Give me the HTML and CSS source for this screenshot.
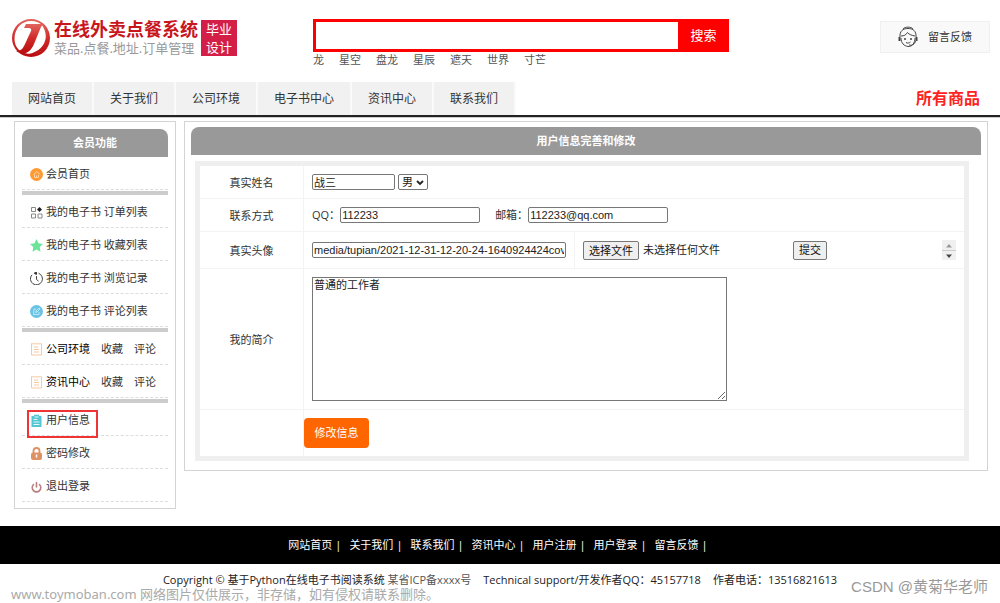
FILE: index.html
```html
<!DOCTYPE html>
<html lang="zh-CN">
<head>
<meta charset="utf-8">
<title>在线外卖点餐系统</title>
<link rel="stylesheet" href="styles.css">
</head>
<body>
<header class="header">
  <a class="logo" href="#">
    <svg class="logo-mark" viewBox="0 0 38 38" aria-hidden="true">
      <defs>
        <linearGradient id="red" x1="0" y1="0" x2="0" y2="1"><stop offset="0" stop-color="#e2655f"/><stop offset=".5" stop-color="#cf2a28"/><stop offset="1" stop-color="#b90d10"/></linearGradient>
      </defs>
      <path fill="url(#red)" fill-rule="evenodd" d="M19 0a19 19 0 1 0 0 38a19 19 0 1 0 0-38zM19 2C29 2 35 9 35 18C35 28 29 35 20 35C9 35 2.500 29 2.500 20C2.500 10 9 2 19 2z"/>
      <path fill="url(#red)" d="M14 5H31L29 8L22 25C18 34 12 37 4 32C10 32 11 29 13 25L19 12C20 9.500 18 9 15 9H12z"/>
      <path fill="url(#red)" d="M29 5C38 12 39 24 31 31C26 35 20 37 13 36C24 34 31 29 33 22C35 16 33 10 29 5z"/>
    </svg>
    <span class="logo-text">
      <strong class="logo-name">在线外卖点餐系统</strong>
      <span class="logo-sub">菜品.点餐.地址.订单管理</span>
    </span>
    <span class="logo-badge">毕业<br>设计</span>
  </a>
  <div class="search">
    <form class="search-form">
      <input class="search-input" type="text" aria-label="搜索">
      <button class="search-button" type="button">搜索</button>
    </form>
    <div class="hot-words">
      <a href="#">龙</a><a href="#">星空</a><a href="#">盘龙</a><a href="#">星辰</a><a href="#">遮天</a><a href="#">世界</a><a href="#">寸芒</a>
    </div>
  </div>
  <a class="feedback" href="#">
    <svg class="feedback-icon" viewBox="0 0 20 22" fill="none" stroke="#444" stroke-width="1" aria-hidden="true">
      <path d="M5 3C7 .5 13 .5 15 3M2 11C1.500 5 5 2.500 10 2.500S18.500 5 18 11M3 12C3 17 6 20 10 20.500S17 17 17 12M3 10C6 10 8 9 9.500 6.500C11 8.500 14 9.500 17 10M8 16.500C9.500 17.500 11.500 17 12.500 16M17.500 15C17 18 14 20 11 19"/>
      <path stroke-width="2" d="M1.500 11v4M18.500 11v4"/>
      <circle cx="7" cy="13" r=".6" fill="#444"/><circle cx="13" cy="13" r=".6" fill="#444"/>
    </svg>
    留言反馈
  </a>
</header>

<nav class="nav">
  <a class="tab" href="#">网站首页</a>
  <a class="tab" href="#">关于我们</a>
  <a class="tab" href="#">公司环境</a>
  <a class="tab" href="#">电子书中心</a>
  <a class="tab" href="#">资讯中心</a>
  <a class="tab" href="#">联系我们</a>
  <a class="all-goods" href="#">所有商品</a>
</nav>

<div class="page">
  <aside class="sidebar">
    <h2 class="panel-title">会员功能</h2>
    <ul class="menu">
      <li class="menu-item"><svg class="icon" viewBox="0 0 13 13"><circle cx="6.500" cy="6.500" r="6.500" fill="#ff9a33"/><path d="M3.500 6.500L7 3.500L9.500 6M4.500 6.500V9.500H8.500V6.500M6.500 9V7.500" fill="none" stroke="#ffd9ad" stroke-width=".9"/></svg><a href="#">会员首页</a></li>
    </ul>
    <ul class="menu">
      <li class="menu-item"><svg class="icon" viewBox="0 0 13 13" fill="none" stroke="#888"><path d="M1.500 1.500h4v4h-4zM1.500 8h4v4h-4zM8 8h4v4H8z"/><path d="M9.500 1L12 3.500L9.500 6L7 3.500z" fill="#222" stroke="none"/></svg><a href="#">我的电子书 订单列表</a></li>
      <li class="menu-item"><svg class="icon" viewBox="0 0 13 13"><path fill="#6be39a" d="M6.500 0L8.500 4.300L13 4.900L9.700 8.100L10.500 12.800L6.500 10.500L2.500 12.800L3.300 8.100L0 4.900L4.500 4.300z"/></svg><a href="#">我的电子书 收藏列表</a></li>
      <li class="menu-item"><svg class="icon" viewBox="0 0 13 13" fill="none" stroke="#444"><path d="M8.500 1.200A6 6 0 1 1 2 2.800M6.500 4v3.500L8.500 9"/><path d="M4 1.300L6.500 0V2.500z" fill="#222"/></svg><a href="#">我的电子书 浏览记录</a></li>
      <li class="menu-item"><svg class="icon" viewBox="0 0 13 13"><circle cx="6.500" cy="6.500" r="6.500" fill="#69c3e4"/><path d="M6 4H4L3.500 9.500H9V7M5.500 7.500L6 6L9 3L10 4L7 7z" fill="none" stroke="#d3effa" stroke-width=".8"/></svg><a href="#">我的电子书 评论列表</a></li>
    </ul>
    <ul class="menu">
      <li class="menu-item"><svg class="icon" viewBox="0 0 13 13" fill="none" stroke="#f8c9a0"><path d="M1.500 1V12H11.500V1M1 .8H12M4 4h4M4 6.500h5M4 9h5"/></svg><a class="strong" href="#">公司环境</a><a href="#">收藏</a><a href="#">评论</a></li>
      <li class="menu-item"><svg class="icon" viewBox="0 0 13 13" fill="none" stroke="#f8c9a0"><path d="M1.500 1V12H11.500V1M1 .8H12M4 4h4M4 6.500h5M4 9h5"/></svg><a class="strong" href="#">资讯中心</a><a href="#">收藏</a><a href="#">评论</a></li>
    </ul>
    <ul class="menu">
      <li class="menu-item current"><svg class="icon" viewBox="0 0 13 13"><path fill="#55c5d3" d="M1.500 2H4V.8H9V2H11.500V13H1.500z"/><path stroke="#e2fafa" d="M4.500 3h4M3.500 5.500h4M3.500 8h6M3.500 10.500h6"/></svg><a href="#">用户信息</a></li>
      <li class="menu-item"><svg class="icon" viewBox="0 0 13 13"><path fill="none" stroke="#dd9164" stroke-width="1.800" d="M3.500 6V4A3 3 0 0 1 9.500 4V6"/><rect x="1" y="5.500" width="11" height="7.500" rx="2" fill="#dd9164"/><path stroke="#fff" stroke-width="1.500" d="M6.500 7.500v3"/></svg><a href="#">密码修改</a></li>
      <li class="menu-item"><svg class="icon" viewBox="0 0 13 13"><path fill="none" stroke="#b97f80" stroke-width="1.600" stroke-linecap="round" d="M3.500 4.500A4.300 4.300 0 1 0 9.500 4.500M6.500 2.500V7"/></svg><a href="#">退出登录</a></li>
    </ul>
  </aside>

  <main class="main">
    <h1 class="panel-title">用户信息完善和修改</h1>
    <table class="form-table">
      <tr class="row">
        <th scope="row"><label for="name">真实姓名</label></th>
        <td colspan="2"><div class="fields">
          <input id="name" class="text name" type="text" value="战三">
          <span class="select-box">
            <select class="gender" aria-label="性别"><option>男</option><option>女</option></select>
            <svg class="chevron" viewBox="0 0 8 6" aria-hidden="true"><path d="M1 1L4 4L7 1" fill="none" stroke="#222" stroke-width="1.800"/></svg>
          </span>
        </div></td>
      </tr>
      <tr class="row">
        <th scope="row">联系方式</th>
        <td colspan="2"><div class="fields">
          <label class="pair">QQ：<input class="text contact" type="text" value="112233"></label>
          <label class="pair email">邮箱：<input class="text contact" type="text" value="112233@qq.com"></label>
        </div></td>
      </tr>
      <tr class="row-avatar">
        <th scope="row"><label for="avatar">真实头像</label></th>
        <td class="path-cell"><input id="avatar" class="text path" type="text" value="media/tupian/2021-12-31-12-20-24-1640924424cover.jpg"></td>
        <td><div class="upload">
          <div class="file">
            <input id="file" class="file-input" type="file">
            <label class="button" for="file">选择文件</label>
            <span>未选择任何文件</span>
          </div>
          <button class="button" type="button">提交</button>
          <div class="scroller">
            <button class="step" type="button" aria-label="向上"><svg viewBox="0 0 14 10"><path fill="#999" d="M4 7.500L7 4L10 7.500z"/></svg></button>
            <button class="step" type="button" aria-label="向下"><svg viewBox="0 0 14 10"><path fill="#444" d="M4 3.500L7 7L10 3.500z"/></svg></button>
          </div>
        </div></td>
      </tr>
      <tr class="row-bio">
        <th scope="row"><label for="bio">我的简介</label></th>
        <td colspan="2"><textarea id="bio" class="bio">普通的工作者</textarea></td>
      </tr>
      <tr class="row-submit">
        <th></th>
        <td class="submit-cell" colspan="2"><button class="submit" type="button">修改信息</button></td>
      </tr>
    </table>
  </main>
</div>

<footer class="footer">
  <nav class="footer-nav">
    <span class="footer-item"><a href="#">网站首页</a>|</span>
    <span class="footer-item"><a href="#">关于我们</a>|</span>
    <span class="footer-item"><a href="#">联系我们</a>|</span>
    <span class="footer-item"><a href="#">资讯中心</a>|</span>
    <span class="footer-item"><a href="#">用户注册</a>|</span>
    <span class="footer-item"><a href="#">用户登录</a>|</span>
    <span class="footer-item"><a href="#">留言反馈</a>|</span>
  </nav>
  <p class="copyright">
    <span>Copyright © 基于Python在线电子书阅读系统 <span class="muted">某省ICP备xxxx号</span></span>
    <span>Technical support/开发作者QQ：45157718</span>
    <span>作者电话：13516821613</span>
  </p>
  <p class="source-note"><span class="site">www.toymoban.com</span> 网络图片仅供展示，非存储，如有侵权请联系删除。</p>
  <p class="author-mark">CSDN @黄菊华老师</p>
</footer>
</body>
</html>
```

FILE: styles.css
```css
*,
*::after {
  box-sizing: border-box;
}

body {
  margin: 0;
  min-height: 100vh;
  background: #fff;
  color: #333;
  font: 11px/16px "Open Sans", "Noto Sans CJK SC", sans-serif;
}

a {
  color: inherit;
  text-decoration: none;
}

input,
select,
textarea,
button {
  margin: 0;
  font: 11px/14px "Liberation Sans", "Noto Sans CJK SC", sans-serif;
  color: #222;
}

.header {
  display: grid;
  grid-template-columns: 301px 416px 1fr;
  align-items: start;
  padding: 19px 10px 0 12px;
  height: 82px;
}

.logo {
  display: flex;
  align-items: flex-start;
}

.logo-mark {
  width: 38px;
  height: 38px;
}

.logo-text {
  display: flex;
  flex-direction: column;
  width: 147px;
  padding-left: 4px;
  white-space: nowrap;
}

.logo-name {
  color: #c8161d;
  font-size: 18px;
  line-height: 20px;
}

.logo-sub {
  color: #999;
  font-size: 13px;
  line-height: 18px;
}

.logo-badge {
  width: 36px;
  margin: 1px 0 0 4px;
  background: #d31f48;
  color: #fff;
  font-size: 13px;
  line-height: 18px;
  text-align: center;
}

.search-form {
  display: flex;
  height: 33px;
}

.search-input {
  flex: 1;
  min-width: 0;
  border: 3px solid #f00;
  border-right: 0;
  padding: 0 8px;
  font-size: 13px;
}

.search-button {
  width: 51px;
  border: 0;
  background: #f00;
  color: #fff;
  font-size: 13px;
}

.hot-words {
  display: flex;
  gap: 15px;
  color: #555;
}

.feedback {
  justify-self: end;
  display: flex;
  align-items: center;
  justify-content: center;
  gap: 10px;
  width: 110px;
  height: 32px;
  margin-top: 2px;
  border: 1px solid #f0f0f0;
  background: #f9f9f9;
}

.feedback-icon {
  width: 20px;
  height: 22px;
}

.nav {
  display: flex;
  height: 36px;
  padding: 0 20px 0 12px;
  border-bottom: 1px solid #ccc;
  box-shadow: inset 0 -2px #222;
}

.tab {
  height: 33px;
  padding: 0 16px;
  border-right: 2px solid #fafafa;
  background: #f1f1f1;
  font-size: 12px;
  line-height: 33px;
}

.all-goods {
  margin-left: auto;
  color: #f22;
  font-size: 16px;
  font-weight: bold;
  line-height: 33px;
}

.page {
  display: flex;
  align-items: flex-start;
  gap: 8px;
  padding: 3px 12px 17px 14px;
}

.sidebar {
  flex: 0 0 162px;
  padding: 7px 7px 6px;
  border: 1px solid #d4d4d4;
}

.panel-title {
  margin: 0;
  border-radius: 8px 8px 0 0;
  background: #999;
  color: #fff;
  font-size: 11px;
  line-height: 28px;
  text-align: center;
}

.menu {
  margin: 0;
  padding: 0;
  list-style: none;
}

.menu + .menu {
  margin-top: 1px;
  border-top: 4px solid #ccc;
}

.menu-item {
  position: relative;
  display: flex;
  align-items: center;
  gap: 11px;
  height: 33px;
  padding: 2px 0 0 8px;
  border-bottom: 1px dashed #ddd;
  white-space: nowrap;
}

.icon {
  flex: none;
  width: 13px;
  height: 13px;
  margin-right: -8px;
}

.strong {
  color: #000;
}

.current::after {
  content: "";
  position: absolute;
  left: 5px;
  top: 7px;
  width: 71px;
  height: 28px;
  border: 2px solid #ee3434;
}

.main {
  flex: 1;
  min-width: 0;
  padding: 5px 6px 9px;
  border: 1px solid #d4d4d4;
}

.form-table {
  width: calc(100% - 16px);
  margin: 6px 12px 0 4px;
  border: 5px solid #efefef;
  border-collapse: separate;
  border-spacing: 0;
}

.form-table th,
.form-table td {
  padding: 0 8px;
  border-bottom: 1px solid #f3f3f3;
}

.form-table th {
  width: 104px;
  padding-top: 2px;
  border-right: 1px solid #f3f3f3;
  font-weight: normal;
}

.form-table tr:last-child > * {
  border-bottom: 0;
}

.row {
  height: 33px;
}

.row-avatar {
  height: 37px;
}

.row-bio {
  height: 141px;
}

.row-submit {
  height: 46px;
}

.fields,
.pair,
.file,
.upload {
  display: flex;
  align-items: center;
}

.fields {
  gap: 3px;
}

.pair {
  white-space: nowrap;
}

.email {
  margin-left: 12px;
}

.text {
  height: 16px;
  padding: 0 1px;
  border: 1px solid #777;
  border-radius: 2px;
}

.name {
  width: 83px;
}

.select-box {
  position: relative;
  display: flex;
}

.gender {
  appearance: none;
  width: 30px;
  height: 16px;
  padding: 0 0 0 3px;
  border: 1px solid #777;
  border-radius: 2px;
  background: #fff;
}

.chevron {
  position: absolute;
  right: 4px;
  top: 6px;
  width: 8px;
  height: 6px;
  pointer-events: none;
}

.contact {
  width: 140px;
}

.form-table .path-cell {
  width: 271px;
  border-right: 1px solid #f3f3f3;
}

.path {
  display: block;
  width: 100%;
}

.file {
  position: relative;
  gap: 4px;
  width: 210px;
  color: #222;
}

.file-input {
  position: absolute;
  width: 1px;
  height: 1px;
  opacity: 0;
}

.button {
  height: 19px;
  padding: 0 5px;
  border: 1px solid #777;
  border-radius: 2px;
  background: #efefef;
  color: #111;
  line-height: 17px;
}

.scroller {
  display: grid;
  width: 14px;
  margin-left: auto;
  background: #f0f0f0;
}

.step {
  display: block;
  height: 10px;
  padding: 0;
  border: 0;
  background: none;
}

.step + .step {
  border-top: 1px solid #ccc;
}

.step svg {
  display: block;
  width: 14px;
  height: 10px;
}

.bio {
  display: block;
  width: 415px;
  height: 124px;
  padding: 0 1px;
  border: 1px solid #777;
}

.form-table .submit-cell {
  padding: 0;
}

.submit {
  display: block;
  width: 65px;
  height: 30px;
  padding: 0;
  border: 0;
  border-radius: 4px;
  background: #f60;
  color: #fff;
}

.footer {
  position: relative;
}

.footer-nav {
  display: flex;
  justify-content: center;
  gap: 8px;
  padding-right: 4px;
  background: #000;
  color: #fff;
  line-height: 38px;
}

.footer-item {
  display: flex;
  gap: 3px;
}

.copyright {
  display: flex;
  justify-content: center;
  gap: 12px;
  margin: 0;
  padding: 8px 0 14px;
  color: #222;
}

.muted {
  color: #555;
}

.source-note,
.author-mark {
  position: absolute;
  margin: 0;
  color: #aaa;
  white-space: nowrap;
}

.source-note {
  left: 11px;
  top: 60px;
  font-size: 13px;
  line-height: 16px;
}

.site {
  font-family: "Noto Sans", sans-serif;
}

.author-mark {
  right: 12px;
  top: 52px;
  font: 15px/18px "Liberation Sans", "Noto Sans CJK SC", sans-serif;
  color: #999;
}
```
